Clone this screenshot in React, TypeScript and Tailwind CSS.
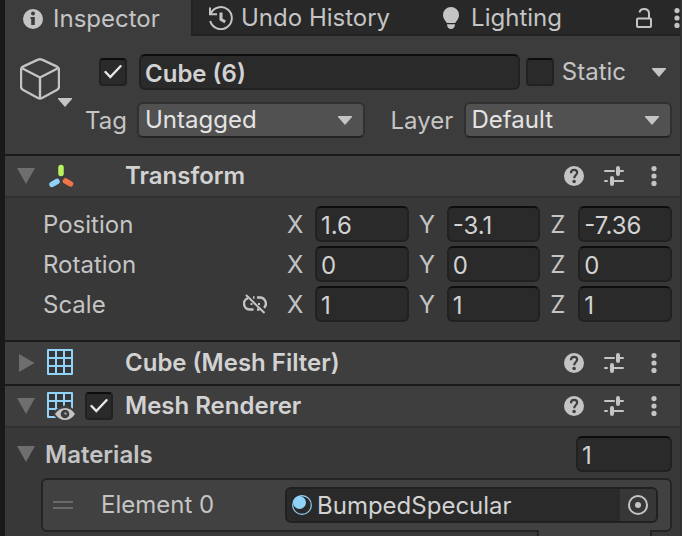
import { useState, type ReactNode } from "react";

const TRANSFORM_ROWS = [
  { name: "Position", values: ["1.6", "-3.1", "-7.36"] },
  { name: "Rotation", values: ["0", "0", "0"] },
  { name: "Scale", values: ["1", "1", "1"] },
];

const AXES = ["X", "Y", "Z"];

const FIELD =
  "h-9 min-w-0 rounded-md border-2 border-[#212121] border-t-[#0d0d0d] bg-[#2a2a2a] px-1 pt-0.5 text-[#d2d2d2] outline-none";

export default function App() {
  return (
    <div className="flex min-h-screen overflow-hidden bg-[#191919] pl-[5px] font-['Inter',sans-serif] text-2xl/8 text-[#c4c4c4]">
      <main className="flex min-w-0 flex-1 flex-col border-r-2 border-[#303030] bg-[#383838]">
        <TabBar />
        <ObjectHeader />

        <SectionHeader title="Transform" icon={<TransformIcon />} open />
        <div className="flex flex-col gap-1 pt-2 pr-2 pb-[18px] pl-[38px]">
          {TRANSFORM_ROWS.map((row) => (
            <VectorRow key={row.name} name={row.name} values={row.values} linked={row.name === "Scale"} />
          ))}
        </div>

        <SectionHeader title="Cube (Mesh Filter)" icon={<GridIcon />} />
        <SectionHeader title="Mesh Renderer" icon={<GridIcon eye />} open checkable />
        <Materials />
      </main>
    </div>
  );
}

function TabBar() {
  return (
    <nav className="flex h-9 bg-[#282828]">
      <button className="flex w-[186px] items-center gap-[10px] bg-[#3c3c3c] pt-0.5 pl-[18px]">
        <svg className="size-5" viewBox="0 0 20 20">
          <circle cx="10" cy="10" r="10" fill="#c4c4c4" />
          <circle cx="10" cy="4.6" r="2" fill="#3c3c3c" />
          <path d="M7.500 8h4.300v8H8.200v-6h-.7z" fill="#3c3c3c" />
        </svg>
        Inspector
      </button>
      <div className="flex min-w-0 flex-1 items-center border-b-2 border-l-2 border-[#222222] pt-0.5">
        <button className="flex items-center gap-2 pl-4">
          <svg className="size-6" viewBox="0 0 24 24" fill="none" stroke="#c4c4c4" strokeWidth="2">
            <path d="M1 1.500v6.800h7" />
            <path d="M1.600 8A11 11 0 1 1 1.200 15" />
            <path d="M12 6.500v7l4.200 2.400" strokeWidth="3" />
          </svg>
          Undo History
        </button>
        <button className="ml-[53px] flex items-center gap-3">
          <svg className="h-[22px] w-4" viewBox="0 0 16 22" fill="#c4c4c4">
            <path d="M8 0a8 8 0 0 1 8 8c0 3.600-2.300 5.600-3.800 8H3.800C2.300 13.600 0 11.600 0 8a8 8 0 0 1 8-8z" />
            <path d="M4 17.300h8c0 3-1.600 4.700-4 4.700s-4-1.700-4-4.700z" />
          </svg>
          Lighting
        </button>
        <button aria-label="Lock" className="mr-[22px] ml-auto">
          <svg className="h-5 w-4" viewBox="0 0 16 20" fill="none" stroke="#c4c4c4" strokeWidth="2">
            <rect x="1" y="10.500" width="14" height="8.500" rx="1" />
            <path d="M3.500 4.500C4 2 5.600 1 8 1c3 0 5 1.600 5 4.500v5" />
          </svg>
        </button>
        <button aria-label="Tab menu">
          <Dots />
        </button>
      </div>
    </nav>
  );
}

function ObjectHeader() {
  return (
    <header className="flex bg-[#3c3c3c] pt-[18px] pr-2 pb-4 pl-[15px]">
      <button aria-label="Object icon" className="flex w-[79px] items-start pt-1">
        <svg className="h-[42px] w-10" viewBox="0 0 40 42" fill="none" stroke="#c4c4c4" strokeWidth="2.400" strokeLinejoin="round">
          <path d="M20 1.200Q21 1.200 22 1.700L36.500 8.400Q39 9.600 39 12v16.500Q39 31 36.800 32L22 40Q20 41 18 40L3.200 32Q1 31 1 28.500V12Q1 9.600 3.500 8.400L18 1.700Q19 1.200 20 1.200z" />
          <path d="M2.500 10.500L20 19.500l17.500-9M20 19.500V40.500" />
        </svg>
        <Caret className="-ml-0.5 mt-10 h-[9px] w-[14px] shrink-0" />
      </button>
      <div className="flex min-w-0 flex-1 flex-col gap-3">
        <div className="flex items-center">
          <Checkbox label="Active" defaultChecked />
          <input aria-label="Name" defaultValue="Cube (6)" className={`${FIELD} ml-3 flex-1 font-semibold`} />
          <label className="ml-1.5 flex items-center gap-2">
            <Checkbox />
            Static
          </label>
          <button aria-label="Static options" className="mr-1.5 ml-[26px]">
            <Caret className="h-[9px] w-[14px]" />
          </button>
        </div>
        <div className="-ml-4 flex items-center">
          <label className="flex min-w-0 flex-[280] items-center">
            <span className="w-[54px] shrink-0 pt-0.5 pl-0.5">Tag</span>
            <Dropdown value="Untagged" />
          </label>
          <label className="ml-[26px] flex min-w-0 flex-[280] items-center">
            <span className="w-[73px] shrink-0 pt-0.5">Layer</span>
            <Dropdown value="Default" />
          </label>
        </div>
      </div>
    </header>
  );
}

function SectionHeader({
  title, icon, open = false, checkable = false,
}: {
  title: string; icon: ReactNode; open?: boolean; checkable?: boolean;
}) {
  return (
    <div
      className={`flex h-11 shrink-0 items-center border-t-2 border-t-[#1a1a1a] bg-[#3e3e3e] pr-4 pl-3 ${
        open ? "border-b-2 border-b-[#303030]" : ""
      }`}
    >
      <Foldout open={open} />
      <span className="ml-3 flex w-[38px] items-center">{icon}</span>
      <span className="flex w-10 items-center">{checkable && <Checkbox label={title} defaultChecked />}</span>
      <h2 className="min-w-0 flex-1 font-semibold whitespace-nowrap text-[#d2d2d2]">{title}</h2>
      <div className="flex items-center gap-5">
        <button aria-label="Help">
          <svg className="size-5" viewBox="0 0 20 20">
            <circle cx="10" cy="10" r="10" fill="#c4c4c4" />
            <path d="M6.900 7.200C7 5 8.200 3.900 10.100 3.900c1.900 0 3.100 1.100 3.100 2.700 0 2.400-3 2.600-3 5.600" fill="none" stroke="#3e3e3e" strokeWidth="2.200" />
            <circle cx="10.100" cy="15.500" r="1.800" fill="#3e3e3e" />
          </svg>
        </button>
        <button aria-label="Presets">
          <svg className="size-5" viewBox="0 0 20 20" fill="none" stroke="#c4c4c4" strokeWidth="2" strokeLinecap="round">
            <path d="M1 5h9M15 5h4M1 15h2M9 15h10" />
            <path d="M14 2v6M8 12v6" strokeWidth="4" />
          </svg>
        </button>
        <button aria-label="More" className="flex w-5 justify-center">
          <Dots />
        </button>
      </div>
    </div>
  );
}

function VectorRow({ name, values, linked }: { name: string; values: string[]; linked: boolean }) {
  return (
    <div className="flex items-center">
      <span className="w-[200px] shrink-0 pt-0.5">{name}</span>
      <span className="flex w-11 shrink-0">
        {linked && (
          <button aria-label="Constrained proportions">
            <svg className="h-5 w-6" viewBox="0 0 24 20" fill="none" stroke="#c4c4c4" strokeWidth="2.400">
              <path d="M5 4.200a5.800 5.800 0 0 0 2 11.300h3.500M10 3.500h1.500M14 3.500h3a6 6 0 0 1 4 10.300M14 15.500h2.500" />
              <path d="M7.500 10h2M11.500 10h1.500M15 10h2" strokeWidth="2" />
              <path d="M3 1l18.500 18" strokeWidth="2" />
            </svg>
          </button>
        )}
      </span>
      <div className="flex min-w-0 flex-1 gap-[10px]">
        {AXES.map((axis, i) => (
          <label key={axis} className="flex min-w-0 flex-1 items-center">
            <span className="w-7 shrink-0 pt-0.5">{axis}</span>
            <input defaultValue={values[i]} className={`${FIELD} w-0 flex-1`} />
          </label>
        ))}
      </div>
    </div>
  );
}

function Materials() {
  return (
    <section className="pt-2 pr-2">
      <div className="flex items-center pl-3">
        <Foldout open />
        <h3 className="ml-[10px] flex-1 pt-0.5 font-semibold">Materials</h3>
        <input aria-label="Materials size" defaultValue="1" className={`${FIELD} w-24`} />
      </div>
      <div className="mt-1.5 ml-9 flex h-[54px] items-center rounded-md border-2 border-[#242424] bg-[#414141] pr-3 pl-[10px]">
        <svg className="h-2 w-5" viewBox="0 0 20 8" stroke="#6a6a6a" strokeWidth="2">
          <path d="M0 1h20M0 7h20" />
        </svg>
        <span className="ml-7 w-[184px] shrink-0">Element 0</span>
        <div className="flex h-9 min-w-0 flex-1 items-center overflow-hidden rounded-md border-2 border-[#212121] bg-[#2a2a2a] text-[#d2d2d2]">
          <svg className="ml-[5px] size-5 shrink-0" viewBox="0 0 20 20">
            <circle cx="10" cy="10" r="9.300" fill="none" stroke="#90d2f8" strokeWidth="1.200" />
            <circle cx="7.500" cy="7.500" r="6.500" fill="#90d2f8" />
          </svg>
          <span className="ml-[5px] flex-1 pt-0.5">BumpedSpecular</span>
          <button aria-label="Select material" className="flex h-full w-9 items-center justify-center bg-[#373737]">
            <svg className="size-5" viewBox="0 0 20 20">
              <circle cx="10" cy="10" r="9" fill="none" stroke="#c4c4c4" strokeWidth="2" />
              <circle cx="10" cy="10" r="3" fill="#c4c4c4" />
            </svg>
          </button>
        </div>
      </div>
      {/* list footer, tucked onto the frame above */}
      <div className="relative -mt-0.5 mr-5 ml-auto h-1.5 w-[115px] border-x-2 border-[#242424] bg-[#414141]" />
    </section>
  );
}

function Checkbox({ label, defaultChecked = false }: { label?: string; defaultChecked?: boolean }) {
  const [checked, setChecked] = useState(defaultChecked);
  return (
    <span className="grid size-7 shrink-0 place-items-center">
      <input
        type="checkbox"
        aria-label={label}
        checked={checked}
        onChange={(e) => setChecked(e.target.checked)}
        className="col-start-1 row-start-1 size-7 appearance-none rounded-sm border-2 border-[#212121] border-t-[#0d0d0d] bg-[#2a2a2a]"
      />
      {checked && (
        <svg className="pointer-events-none col-start-1 row-start-1 h-[14px] w-[18px]" viewBox="0 0 18 14" fill="none" stroke="#e8e8e8" strokeWidth="2.400">
          <path d="M1.500 7l4.800 5L16.500 1.200" strokeLinecap="round" />
        </svg>
      )}
    </span>
  );
}

function Dropdown({ value }: { value: string }) {
  return (
    <span className="grid min-w-0 flex-1 items-center">
      <select
        defaultValue={value}
        className="col-start-1 row-start-1 h-9 w-full appearance-none rounded-md border-2 border-[#303030] border-b-[#242424] bg-[#515151] pr-8 pl-1.5 text-[#e4e4e4] outline-none"
      >
        <option>{value}</option>
      </select>
      <Caret className="pointer-events-none col-start-1 row-start-1 mr-[13px] h-[9px] w-[14px] justify-self-end" />
    </span>
  );
}

function Caret({ className }: { className: string }) {
  return (
    <svg className={className} viewBox="0 0 14 9" fill="#c4c4c4">
      <path d="M0 0h14v1L7 9 0 1z" />
    </svg>
  );
}

function Foldout({ open }: { open: boolean }) {
  return (
    <button aria-label="Toggle section" aria-expanded={open} className="flex size-[18px] shrink-0 items-center justify-center">
      <svg className="size-[18px]" viewBox="0 0 18 18" fill="#6e6e6e">
        {open ? <path d="M0 1h18L9 17z" /> : <path d="M2 0v18l15.500-9z" />}
      </svg>
    </button>
  );
}

function Dots() {
  return (
    <svg className="h-5 w-1.5" viewBox="0 0 6 20" fill="#c4c4c4">
      <circle cx="3" cy="2.600" r="2.600" />
      <circle cx="3" cy="10" r="2.600" />
      <circle cx="3" cy="17.400" r="2.600" />
    </svg>
  );
}

function TransformIcon() {
  return (
    <svg className="h-6 w-7" viewBox="0 0 28 24" strokeWidth="5.500" strokeLinecap="round">
      <path d="M14 3.500v6" stroke="#b9f25f" />
      <path d="M10 17.500l-5 2.800" stroke="#90d2f8" />
      <path d="M18.500 17l5 2.800" stroke="#ef7448" />
    </svg>
  );
}

function GridIcon({ eye = false }: { eye?: boolean }) {
  return (
    <svg className="h-7 w-7" viewBox="0 0 28 28" fill="none">
      <path
        d="M1 1h24v24H1zM9 1v24M17 1v24M1 9h24M1 17h24"
        fill="#353535"
        stroke="#90d2f8"
        strokeWidth="2"
        strokeLinejoin="round"
      />
      {eye && (
        <>
          <path d="M5.500 22Q11 13.500 18 13.500T30.500 22Q24 30 18 30T5.500 22z" fill="#3e3e3e" />
          <path d="M8 22q4-6 10-6t10 6q-4 6-10 6T8 22z" fill="#c4c4c4" />
          <circle cx="18" cy="22" r="4.300" fill="#3e3e3e" />
          <path d="M18 20.500a1.500 1.500 0 0 0 1.500 1.500" stroke="#c4c4c4" strokeWidth="1.500" />
        </>
      )}
    </svg>
  );
}
